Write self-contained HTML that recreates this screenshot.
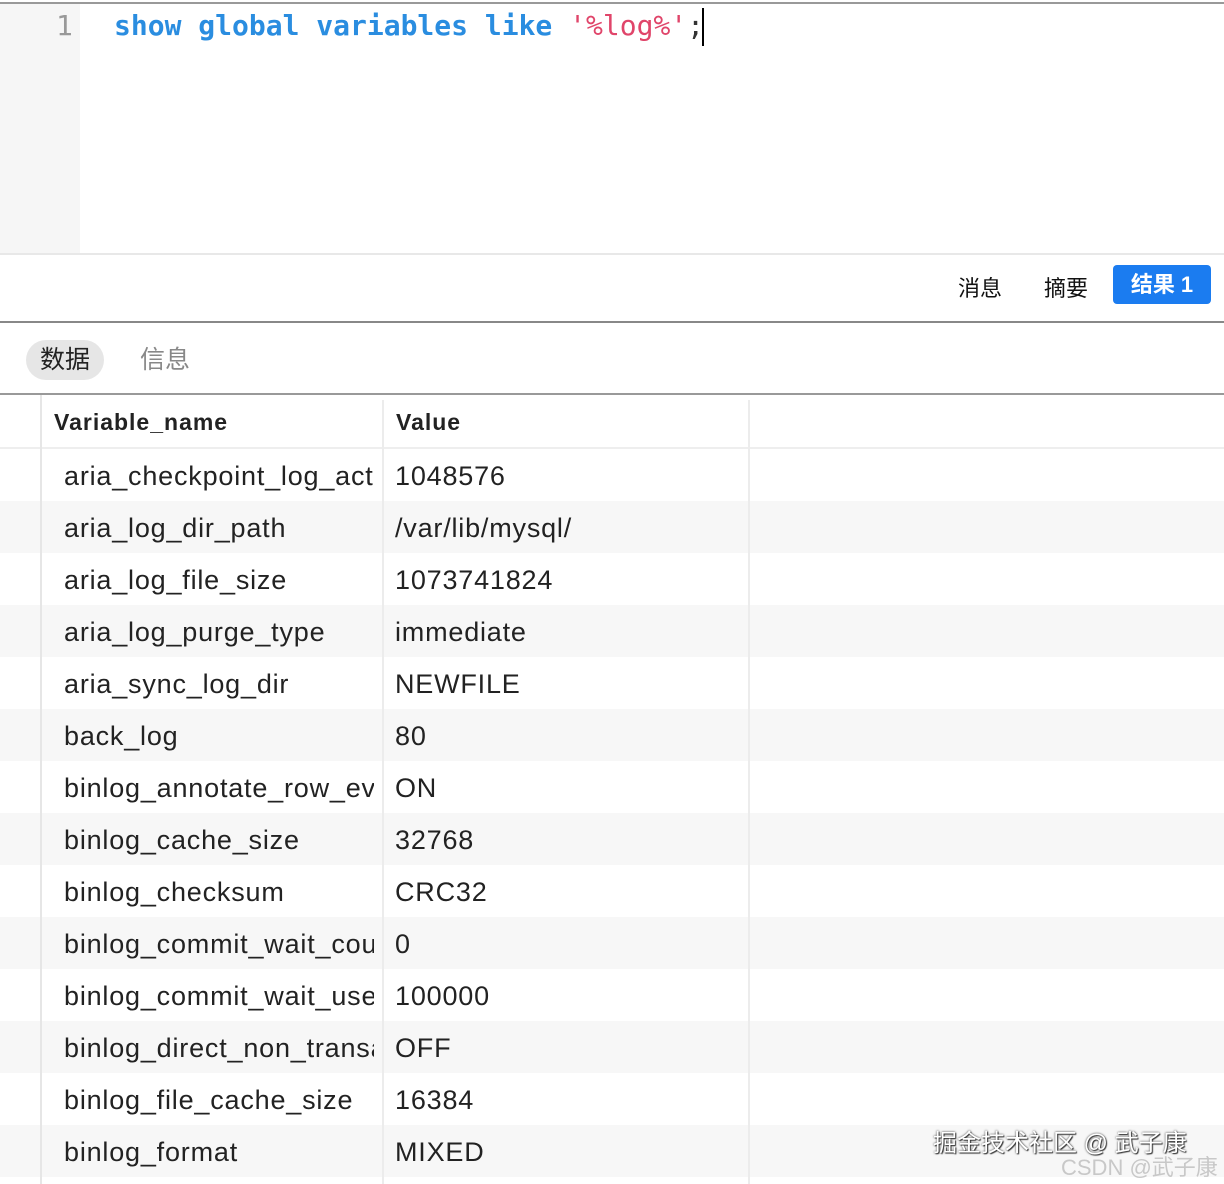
<!DOCTYPE html><html><head><meta charset="utf-8"><style>
body{margin:0;width:1224px;height:1184px;overflow:hidden;background:#fff;font-family:"Liberation Sans","Noto Sans CJK SC",sans-serif;position:relative}
.a{position:absolute}
.row{position:absolute;left:0;width:1224px;height:52px}
.row span{position:absolute;top:12px;font-size:27px;letter-spacing:0.8px;color:#222;white-space:nowrap;overflow:hidden}
.n{left:64px;width:310px}.v{left:395px}
</style></head><body>
<div class="a" style="left:0;top:2px;width:1224px;height:2px;background:#999"></div>
<div class="a" style="left:0;top:4px;width:80px;height:249px;background:#f6f6f6"></div>
<div class="a" style="left:56px;top:9px;font:28px 'DejaVu Sans Mono',monospace;color:#999">1</div>
<div class="a" style="left:114px;top:9px;font:bold 28px 'DejaVu Sans Mono',monospace;color:#2a8de0;white-space:pre">show global variables like <span style="color:#e0456a;font-weight:normal">'%log%'</span><span style="color:#333;font-weight:normal">;</span></div>
<div class="a" style="left:702px;top:8px;width:2px;height:38px;background:#000"></div>
<div class="a" style="left:0;top:253px;width:1224px;height:2px;background:#e8e8e8"></div>
<div class="a" style="left:958px;top:271px;font-size:22px;color:#111">消息</div>
<div class="a" style="left:1044px;top:271px;font-size:22px;color:#111">摘要</div>
<div class="a" style="left:1113px;top:265px;width:98px;height:39px;background:#1b7cf0;border-radius:4px;color:#fff;font-size:22px;line-height:39px;text-align:center;font-weight:bold">结果 1</div>
<div class="a" style="left:0;top:321px;width:1224px;height:2px;background:#888"></div>
<div class="a" style="left:26px;top:340px;width:78px;height:40px;background:#e6e6e6;border-radius:20px;font-size:25px;line-height:40px;text-align:center;color:#222">数据</div>
<div class="a" style="left:140px;top:340px;font-size:25px;line-height:40px;color:#888">信息</div>
<div class="a" style="left:0;top:393px;width:1224px;height:2px;background:#999"></div>
<div class="a" style="left:54px;top:409px;font-weight:bold;font-size:23px;letter-spacing:1px;color:#222">Variable_name</div>
<div class="a" style="left:396px;top:409px;font-weight:bold;font-size:23px;letter-spacing:1px;color:#222">Value</div>
<div class="a" style="left:0;top:447px;width:1224px;height:2px;background:#eee"></div>
<div class="row" style="top:449px"><span class="n">aria_checkpoint_log_activity</span><span class="v">1048576</span></div>
<div class="row" style="top:501px;background:#f7f7f7"><span class="n">aria_log_dir_path</span><span class="v">/var/lib/mysql/</span></div>
<div class="row" style="top:553px"><span class="n">aria_log_file_size</span><span class="v">1073741824</span></div>
<div class="row" style="top:605px;background:#f7f7f7"><span class="n">aria_log_purge_type</span><span class="v">immediate</span></div>
<div class="row" style="top:657px"><span class="n">aria_sync_log_dir</span><span class="v">NEWFILE</span></div>
<div class="row" style="top:709px;background:#f7f7f7"><span class="n">back_log</span><span class="v">80</span></div>
<div class="row" style="top:761px"><span class="n">binlog_annotate_row_events</span><span class="v">ON</span></div>
<div class="row" style="top:813px;background:#f7f7f7"><span class="n">binlog_cache_size</span><span class="v">32768</span></div>
<div class="row" style="top:865px"><span class="n">binlog_checksum</span><span class="v">CRC32</span></div>
<div class="row" style="top:917px;background:#f7f7f7"><span class="n">binlog_commit_wait_count</span><span class="v">0</span></div>
<div class="row" style="top:969px"><span class="n">binlog_commit_wait_usec</span><span class="v">100000</span></div>
<div class="row" style="top:1021px;background:#f7f7f7"><span class="n">binlog_direct_non_transactional</span><span class="v">OFF</span></div>
<div class="row" style="top:1073px"><span class="n">binlog_file_cache_size</span><span class="v">16384</span></div>
<div class="row" style="top:1125px;background:#f7f7f7"><span class="n">binlog_format</span><span class="v">MIXED</span></div>
<div class="a" style="left:40px;top:395px;width:2px;height:789px;background:#e6e6e6"></div>
<div class="a" style="left:382px;top:400px;width:2px;height:784px;background:#ececec"></div>
<div class="a" style="left:748px;top:400px;width:2px;height:784px;background:#ececec"></div>
<div class="a" style="left:933px;top:1123px;font-size:24px;color:#fff;text-shadow:0 0 2px #333,1px 1px 1px #333">掘金技术社区 @ 武子康</div>
<div class="a" style="left:1061px;top:1150px;font-size:22px;color:#c8c8c8">CSDN @武子康</div>
</body></html>
